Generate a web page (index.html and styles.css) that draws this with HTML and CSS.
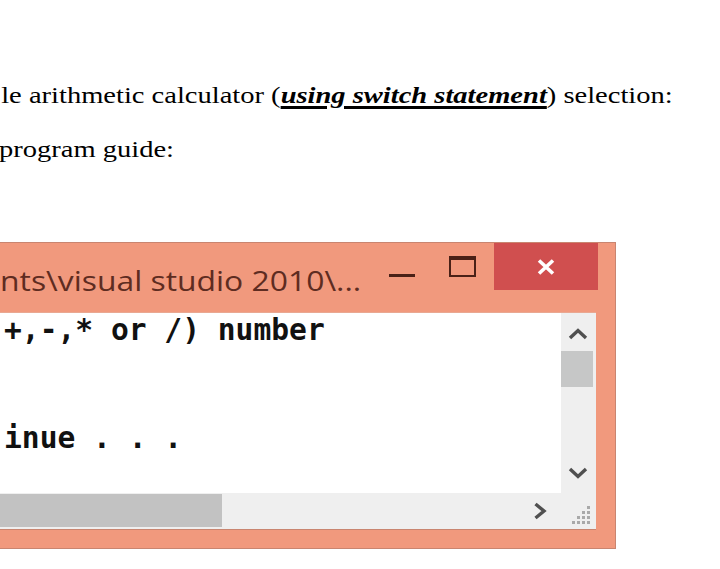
FILE: index.html
```html
<!DOCTYPE html>
<html>
<head>
<meta charset="utf-8">
<link rel="stylesheet" href="styles.css">
</head>
<body>
<div class="doc">
  <p class="doc-line doc-line-1">le arithmetic calculator (<b class="em"><i>using switch statement</i></b>) selection:</p>
  <p class="doc-line doc-line-2">program guide:</p>
</div>
<div class="window">
  <div class="titlebar">
    <div class="title"><span class="title-text">nts\visual studio 2010\...</span></div>
    <div class="controls">
      <div class="btn btn-min"><span class="min-bar"></span></div>
      <div class="btn btn-max"><span class="max-box"></span></div>
      <div class="btn btn-close">
        <svg width="20" height="16" viewBox="0 0 20 16"><path d="M3 1.5 L17 14.5 M17 1.5 L3 14.5" stroke="#fff" stroke-width="3.6" fill="none"/></svg>
      </div>
    </div>
  </div>
  <div class="client">
    <pre class="console">+,-,* or /) number


inue . . .</pre>
    <div class="vscroll">
      <div class="arrow arrow-up">
        <svg width="20" height="12" viewBox="0 0 20 12"><path d="M2 10 L10 2.5 L18 10" stroke="#505050" stroke-width="3.4" fill="none"/></svg>
      </div>
      <div class="vthumb"></div>
      <div class="vtrack"></div>
      <div class="arrow arrow-down">
        <svg width="20" height="12" viewBox="0 0 20 12"><path d="M2 2 L10 9.5 L18 2" stroke="#505050" stroke-width="3.4" fill="none"/></svg>
      </div>
    </div>
    <div class="hscroll">
      <div class="hthumb"></div>
      <div class="htrack"></div>
      <div class="arrow arrow-right">
        <svg width="14" height="18" viewBox="0 0 14 18"><path d="M2.5 2 L11 9 L2.5 16" stroke="#505050" stroke-width="3.4" fill="none"/></svg>
      </div>
    </div>
    <div class="corner">
      <svg width="20" height="20" viewBox="0 0 20 20">
        <g fill="#a9a9a9">
          <rect x="15" y="1" width="3" height="3"/>
          <rect x="15" y="6" width="3" height="3"/>
          <rect x="10" y="6" width="3" height="3"/>
          <rect x="15" y="11" width="3" height="3"/>
          <rect x="10" y="11" width="3" height="3"/>
          <rect x="5" y="11" width="3" height="3"/>
          <rect x="15" y="16" width="3" height="3"/>
          <rect x="10" y="16" width="3" height="3"/>
          <rect x="5" y="16" width="3" height="3"/>
          <rect x="0" y="16" width="3" height="3"/>
        </g>
      </svg>
    </div>
  </div>
</div>
</body>
</html>
```

FILE: styles.css
```css
html, body {
  margin: 0;
  padding: 0;
  background: #ffffff;
  overflow: hidden;
}

body {
  width: 720px;
  height: 569px;
}

.doc {
  padding-top: 68px;
  font-family: "Liberation Serif", "Times New Roman", serif;
  font-size: 24px;
  color: #000000;
}

.doc-line {
  margin: 0;
  width: 600px;
  line-height: 54px;
  white-space: nowrap;
  transform: scaleX(1.188);
  transform-origin: 0 0;
}

.doc-line-1 {
  padding-left: 1px;
}

.doc-line-2 {
  margin-left: -1px;
}

.em {
  text-decoration: underline;
  text-decoration-thickness: 3px;
  text-underline-offset: 3px;
}

.window {
  margin-top: 66px;
  width: 615px;
  height: 305px;
  background: #f1997d;
  border: 1px solid #c98570;
  border-left: none;
  display: flex;
  flex-direction: column;
}

.titlebar {
  height: 69px;
  display: flex;
  align-items: flex-start;
}

.title {
  flex: 1;
  padding-top: 20px;
  font-family: "Open Sans", "Noto Sans", sans-serif;
  font-size: 27px;
  line-height: 36px;
  color: #5e2c21;
  white-space: nowrap;
  overflow: hidden;
}

.title-text {
  display: inline-block;
  transform: scaleX(1.18);
  transform-origin: 0 0;
}

.controls {
  display: flex;
  align-items: flex-start;
  margin-right: 17px;
}

.btn {
  height: 47px;
  display: flex;
  align-items: flex-start;
  justify-content: center;
}

.btn-min {
  width: 52px;
}

.min-bar {
  margin-top: 31px;
  width: 26px;
  height: 3px;
  background: #4a2117;
}

.btn-max {
  width: 66px;
  padding-left: 3px;
  box-sizing: border-box;
}

.max-box {
  margin-top: 13px;
  width: 27px;
  height: 21px;
  box-sizing: border-box;
  border: 2px solid #4a2117;
  border-top-width: 4px;
}

.btn-close {
  width: 104px;
  background: #d04f4f;
  align-items: center;
}

.client {
  margin-right: 19px;
  background: #ffffff;
  border-top: 1px solid #e9a892;
  display: grid;
  grid-template-columns: 561px 35px;
  grid-template-rows: 180px 36px;
  border-bottom: 1px solid #c98570;
}

.console {
  margin: 0;
  padding-left: 4px;
  font-family: "DejaVu Sans Mono", monospace;
  font-weight: bold;
  font-size: 29.6px;
  line-height: 36px;
  color: #111;
  overflow: hidden;
  margin-top: -1px;
}

.vscroll {
  background: #efefef;
  display: flex;
  flex-direction: column;
}

.arrow {
  display: flex;
  align-items: center;
  justify-content: center;
}

.arrow-up {
  height: 40px;
  padding-right: 2px;
  padding-top: 2px;
  box-sizing: border-box;
}

.vthumb {
  height: 36px;
  width: 32px;
  margin-top: -2px;
  background: #c6c7c7;
}

.vtrack {
  flex: 1;
}

.arrow-down {
  height: 40px;
  padding-right: 2px;
}

.hscroll {
  background: #efefef;
  display: flex;
  align-items: stretch;
}

.hthumb {
  width: 222px;
  margin: 1px 0 2px 0;
  background: #c2c2c2;
}

.htrack {
  flex: 1;
}

.arrow-right {
  width: 30px;
  margin-right: 6px;
}

.corner {
  background: #efefef;
  display: flex;
  align-items: flex-end;
  justify-content: flex-end;
  padding: 0 4px 4px 0;
}
```
